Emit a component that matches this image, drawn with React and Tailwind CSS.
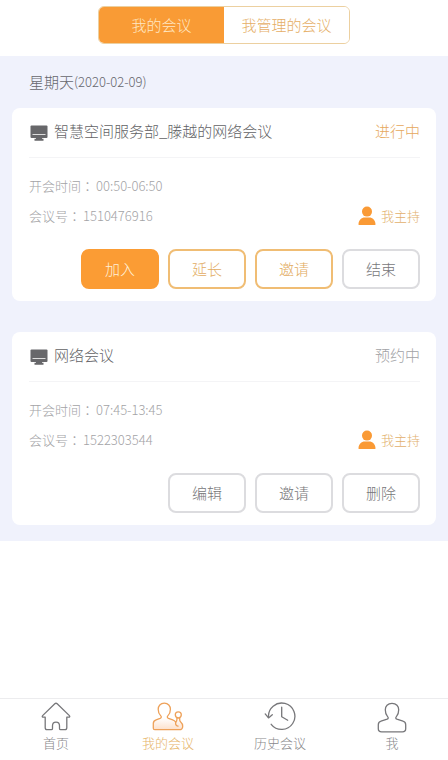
import React, { useState } from "react";
import clsx from "clsx";

// ── Data ─────────────────────────────────────────────────────────────────────
const TABS = ["我的会议", "我管理的会议"];

const MEETINGS = [
  {
    id: "1510476916",
    title: "智慧空间服务部_滕越的网络会议",
    time: "00:50-06:50",
    status: "进行中",
    active: true,
    actions: [
      { label: "加入", variant: "solid" },
      { label: "延长", variant: "outline" },
      { label: "邀请", variant: "outline" },
      { label: "结束", variant: "plain" },
    ],
  },
  {
    id: "1522303544",
    title: "网络会议",
    time: "07:45-13:45",
    status: "预约中",
    active: false,
    actions: [
      { label: "编辑", variant: "plain" },
      { label: "邀请", variant: "plain" },
      { label: "删除", variant: "plain" },
    ],
  },
];

const buttonStyles = {
  solid: "border-2 border-[#fb9c34] bg-[#fb9c34] text-[#fff0d8]",
  outline: "border-2 border-[#f0bd74] bg-white text-[#e2ac62]",
  plain: "border-2 border-[#dcdcdf] bg-white text-[#77777a]",
};

// ── Icons ────────────────────────────────────────────────────────────────────
function MonitorIcon() {
  return (
    <svg width="18" height="16" viewBox="0 0 18 16" className="shrink-0" aria-hidden="true">
      <rect x="0.5" y="0.5" width="17" height="12.500" rx="1" fill="#67676a" />
      <path d="M2.500 9.500h13" stroke="#dcdcdc" strokeWidth="1" />
      <path d="M6 12.500h6v1.300h1.500v1.900h-9v-1.900H6z" fill="#67676a" />
    </svg>
  );
}

function HostIcon() {
  return (
    <svg width="18" height="20" viewBox="0 0 18 20" fill="#fa9a35" aria-hidden="true">
      <circle cx="9" cy="5.600" r="5" />
      <path d="M1.300 18.900c-.6 0-.9-.4-.8-1 .4-3.700 2.900-6.300 6.300-6.300h4.400c3.400 0 5.900 2.600 6.300 6.300.1.600-.2 1-.8 1z" />
    </svg>
  );
}

function HomeIcon() {
  return (
    <svg width="32" height="32" viewBox="0 0 32 32" fill="none" stroke="#77777a" strokeWidth="1.300" strokeLinejoin="round" strokeLinecap="round" aria-hidden="true">
      <path d="M5.200 16.200H3.400c-1.200 0-1.500-.9-.8-1.600L14.800 2.800c.8-.7 1.600-.7 2.400 0l12.200 11.800c.7.7.4 1.600-.8 1.600h-1.800v10.600c0 1.200-.7 1.900-1.900 1.900h-4.200c-.9 0-1.200-.5-1.200-1.200v-2.700c0-2.200-1.300-3.600-3.500-3.600s-3.500 1.400-3.500 3.600v2.700c0 .7-.3 1.200-1.200 1.200H7.100c-1.200 0-1.900-.7-1.900-1.900z" />
    </svg>
  );
}

function MeetingIcon() {
  return (
    <svg width="32" height="32" viewBox="0 0 32 32" fill="none" stroke="#eea159" strokeWidth="1.300" strokeLinejoin="round" strokeLinecap="round" aria-hidden="true">
      <defs>
        <linearGradient id="bodyFill" x1="0" y1="0" x2="0" y2="1">
          <stop offset="0.55" stopColor="#ffffff" />
          <stop offset="1" stopColor="#fde0cb" />
        </linearGradient>
      </defs>
      <path
        fill="url(#bodyFill)"
        d="M12.300 2.200c-3.900 0-6.100 2.700-6.100 6.100 0 2.600.7 4.700 2.400 6.300 1.100 1.100.9 2.200-.5 2.800l-4 1.400c-2 .7-2.800 1.800-2.800 3.600v4.800c0 1 .5 1.500 1.500 1.500h24.500c2.300 0 3.400-1.300 3.400-3.500 0-2-.8-3.200-2-4.200-.7-.6-1-1.200-1-2.200v-1.900h-2.800v1.700c0 1.300-.4 2-1.200 2.700-.5-1.200-1.500-2-3-2.500l-4.200-1.400c-1.400-.6-1.600-1.700-.5-2.800 1.700-1.600 2.400-3.700 2.400-6.300 0-3.400-2.200-6.100-6.100-6.100z"
      />
      <circle cx="26.300" cy="13.800" r="3" fill="#fff" />
      <path d="M23.700 21.300c-.4 2.100.4 3.500 2.300 3.900" />
    </svg>
  );
}

function HistoryIcon() {
  return (
    <svg width="32" height="32" viewBox="0 0 32 32" fill="none" stroke="#77777a" strokeWidth="1.300" strokeLinejoin="round" strokeLinecap="round" aria-hidden="true">
      <path d="M4.500 16.300A13.200 13.200 0 1 1 7.200 23.300" />
      <path d="M1.200 12.900l3.300 4 3.800-3.200" />
      <path d="M17.700 6.200v9.500l6 3.500" />
    </svg>
  );
}

function PersonIcon() {
  return (
    <svg width="32" height="32" viewBox="0 0 32 32" fill="none" stroke="#77777a" strokeWidth="1.300" strokeLinejoin="round" strokeLinecap="round" aria-hidden="true">
      <path d="M16 2.400c-4.300 0-6.700 2.800-6.700 6.400 0 2.900.7 5.200 2.300 6.800 1 1 .8 2-.5 2.500l-6.100 2.100c-1.900.6-2.700 1.800-2.700 3.600v4c0 2.300 1 3.100 3.300 3.100h20.800c2.300 0 3.300-.8 3.300-3.100v-4c0-1.800-.8-3-2.700-3.600l-6.100-2.100c-1.300-.5-1.500-1.500-.5-2.500 1.600-1.600 2.300-3.900 2.300-6.800 0-3.600-2.400-6.400-6.700-6.400z" />
    </svg>
  );
}

const NAV = [
  { label: "首页", Icon: HomeIcon },
  { label: "我的会议", Icon: MeetingIcon, current: true },
  { label: "历史会议", Icon: HistoryIcon },
  { label: "我", Icon: PersonIcon },
];

// ── Meeting card ─────────────────────────────────────────────────────────────
function MetaRow({ label, value, children }) {
  return (
    <div className="flex h-[30px] items-center text-[13px] text-[#a3a3a6]">
      <span>{label}</span>
      <span className="mr-[2px] font-['Noto_Sans_CJK_TC',sans-serif]" lang="zh-TW">：</span>
      <span>{value}</span>
      {children}
    </div>
  );
}

function MeetingCard({ meeting }) {
  return (
    <article className="rounded-lg bg-white pr-4 pb-3 pl-[17px]">
      <header className="flex h-[50px] items-center border-b border-[#f4f4f6] text-[15px]">
        <span className="flex w-[25px] justify-start pl-px">
          <MonitorIcon />
        </span>
        <h2 className="flex-1 pb-[2px] text-[#626265]">{meeting.title}</h2>
        <span className={clsx("pb-[2px]", meeting.active ? "text-[#e6a85c]" : "text-[#a2a2a5]")}>
          {meeting.status}
        </span>
      </header>

      <div className="pt-[13px]">
        <MetaRow label="开会时间" value={meeting.time} />
        <MetaRow label="会议号" value={meeting.id}>
          <span className="ml-auto flex items-center gap-[5px] text-[#e2b06c]">
            <HostIcon />
            我主持
          </span>
        </MetaRow>
      </div>

      <div className="flex justify-end gap-[9px] pt-[18px]">
        {meeting.actions.map((action) => (
          <button
            key={action.label}
            type="button"
            className={clsx("h-10 w-[78px] rounded-lg text-[15px]", buttonStyles[action.variant])}
          >
            {action.label}
          </button>
        ))}
      </div>
    </article>
  );
}

export default function App() {
  const [tab, setTab] = useState(0);

  return (
    <div
      lang="zh-CN"
      className="flex min-h-screen flex-col bg-white font-['Noto_Sans_CJK_SC',sans-serif] font-light"
    >
      {/* Tabs */}
      <div className="flex h-14 justify-center pt-[6px]">
        <div className="flex h-[38px] overflow-hidden rounded-md border border-[#ecd0a0]">
          {TABS.map((label, i) => (
            <button
              key={label}
              type="button"
              onClick={() => setTab(i)}
              className={clsx(
                "w-[125px] text-[15px]",
                tab === i ? "bg-[#f99b35] text-[#ffe8c4]" : "bg-white text-[#e5ae66]"
              )}
            >
              {label}
            </button>
          ))}
        </div>
      </div>

      {/* Meeting list */}
      <main className="bg-[#f0f2fc] px-3 pb-4">
        <h1 className="flex h-[52px] items-center pl-[17px] text-[15px] text-[#66666c]">
          星期天<span className="text-[13px]">(2020-02-09)</span>
        </h1>
        <div className="flex flex-col gap-[31px]">
          {MEETINGS.map((meeting) => (
            <MeetingCard key={meeting.id} meeting={meeting} />
          ))}
        </div>
      </main>

      {/* Bottom navigation */}
      <nav className="mt-auto grid h-[62px] grid-cols-4 border-t border-[#ececee]">
        {NAV.map(({ label, Icon, current }) => (
          <a
            key={label}
            href="#"
            aria-current={current ? "page" : undefined}
            className={clsx(
              "flex flex-col items-center pt-[2px] text-[13px] leading-5",
              current ? "text-[#e6b468]" : "text-[#88888b]"
            )}
          >
            <Icon />
            {label}
          </a>
        ))}
      </nav>
    </div>
  );
}
